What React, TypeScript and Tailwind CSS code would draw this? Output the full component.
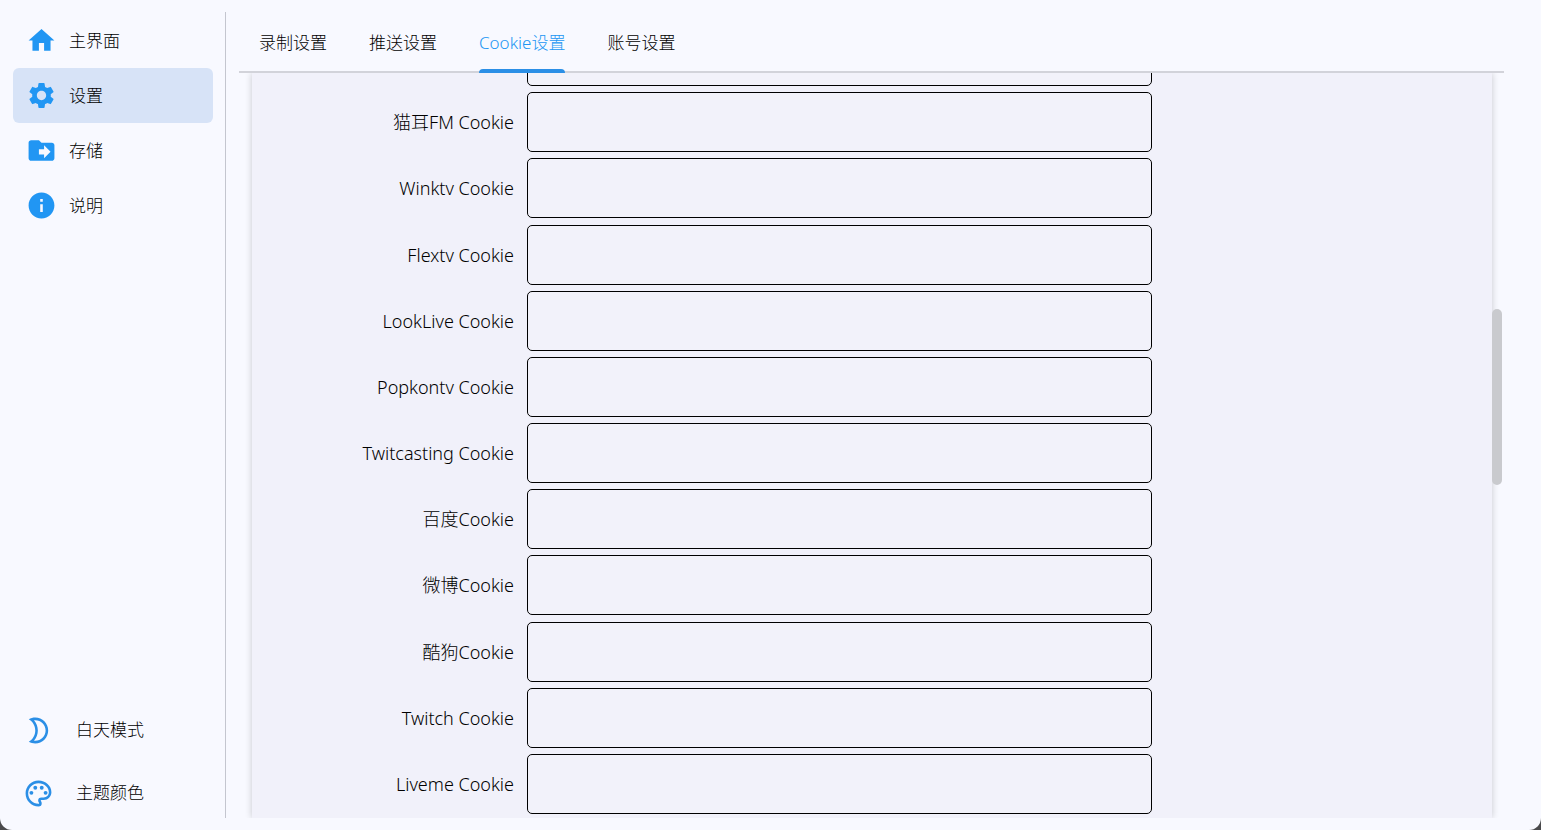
import React, { useState } from 'react';
import clsx from 'clsx';
import type { IconType } from 'react-icons';
import {
  MdDriveFileMove,
  MdHome,
  MdInfo,
  MdOutlineModeNight,
  MdOutlinePalette,
  MdSettings,
} from 'react-icons/md';

interface NavItem {
  label: string;
  icon: IconType;
}

const navItems: NavItem[] = [
  { label: '主界面', icon: MdHome },
  { label: '设置', icon: MdSettings },
  { label: '存储', icon: MdDriveFileMove },
  { label: '说明', icon: MdInfo },
];

const themeItems: NavItem[] = [
  { label: '白天模式', icon: MdOutlineModeNight },
  { label: '主题颜色', icon: MdOutlinePalette },
];

const tabs = ['录制设置', '推送设置', 'Cookie设置', '账号设置'];

const cookieFields = [
  { id: 'maoerfm', label: '猫耳FM Cookie' },
  { id: 'winktv', label: 'Winktv Cookie' },
  { id: 'flextv', label: 'Flextv Cookie' },
  { id: 'looklive', label: 'LookLive Cookie' },
  { id: 'popkontv', label: 'Popkontv Cookie' },
  { id: 'twitcasting', label: 'Twitcasting Cookie' },
  { id: 'baidu', label: '百度Cookie' },
  { id: 'weibo', label: '微博Cookie' },
  { id: 'kugou', label: '酷狗Cookie' },
  { id: 'twitch', label: 'Twitch Cookie' },
  { id: 'liveme', label: 'Liveme Cookie' },
];

const inputClass = 'w-full h-[60px] px-3 rounded-[5px] border border-black bg-[#f2f2fa] outline-none';

const Sidebar: React.FC = () => {
  const [active, setActive] = useState('设置');

  return (
    <aside className="w-[226px] shrink-0 flex flex-col justify-between pt-px pl-[13px] pr-3 border-r border-[#c4c6cf]">
      <nav className="flex flex-col">
        {navItems.map(({ label, icon: Icon }) => (
          <button
            key={label}
            onClick={() => setActive(label)}
            className={clsx(
              'h-[55px] flex items-center gap-3 px-[13px] rounded-md',
              active === label && 'bg-[#d7e3f7]'
            )}
          >
            <Icon className="w-[31px] h-[31px] text-[#2196f3]" />
            <span>{label}</span>
          </button>
        ))}
      </nav>

      {/* Theme controls */}
      <div className="flex flex-col gap-[13px]">
        {themeItems.map(({ label, icon: Icon }) => (
          <button key={label} className="h-[50px] flex items-center gap-[22px] px-[10px]">
            <Icon className="w-[31px] h-[31px] text-[#2b8fe6]" />
            <span>{label}</span>
          </button>
        ))}
      </div>
    </aside>
  );
};

const CookieForm: React.FC = () => {
  return (
    <form className="flex-1 min-h-0 flex flex-col justify-between -mt-[47px] pb-1 text-[18px]">
      <div className="grid grid-cols-[262fr_625fr_327fr] gap-x-[13px]">
        <input aria-label="Cookie" className={clsx(inputClass, 'col-start-2')} />
      </div>
      {cookieFields.map((field) => (
        <div key={field.id} className="grid grid-cols-[262fr_625fr_327fr] items-center gap-x-[13px]">
          <label htmlFor={field.id} className="text-right whitespace-nowrap">
            {field.label}
          </label>
          <input id={field.id} type="text" className={inputClass} />
        </div>
      ))}
    </form>
  );
};

export default function App() {
  const [tab, setTab] = useState('Cookie设置');

  return (
    <div className="h-screen bg-[#4a4a4c]">
      <div className="h-full flex py-3 rounded-b-xl bg-[#f8f9ff] text-[17px] leading-6 font-light text-black font-['Noto_Sans','Noto_Sans_CJK_SC',sans-serif]">
        <Sidebar />

        <main className="relative flex-1 min-w-0 flex flex-col pl-[13px] pr-[37px]">
          {/* Tabs */}
          <div role="tablist" className="h-[61px] shrink-0 flex gap-0.5 border-b-2 border-[#d2d3da]">
            {tabs.map((name) => (
              <button
                key={name}
                role="tab"
                aria-selected={tab === name}
                onClick={() => setTab(name)}
                className={clsx('relative h-[61px] px-5', tab === name && 'text-[#2196f3]')}
              >
                {name}
                {tab === name && (
                  <span className="absolute bottom-0 left-5 right-5 h-1 rounded-t-sm bg-[#2b8fe6]" />
                )}
              </button>
            ))}
          </div>

          {/* Scroll area */}
          <div className="flex-1 min-h-0 flex overflow-hidden pl-[13px] pr-3">
            <div className="flex-1 flex flex-col bg-[#f1f1fa] shadow-[0_0_7px_rgba(0,0,0,0.2)]">
              <CookieForm />
            </div>
          </div>
          <div className="absolute top-[297px] right-[39px] w-[10px] h-44 rounded-full bg-[#c9cace]" />
        </main>
      </div>
    </div>
  );
}
